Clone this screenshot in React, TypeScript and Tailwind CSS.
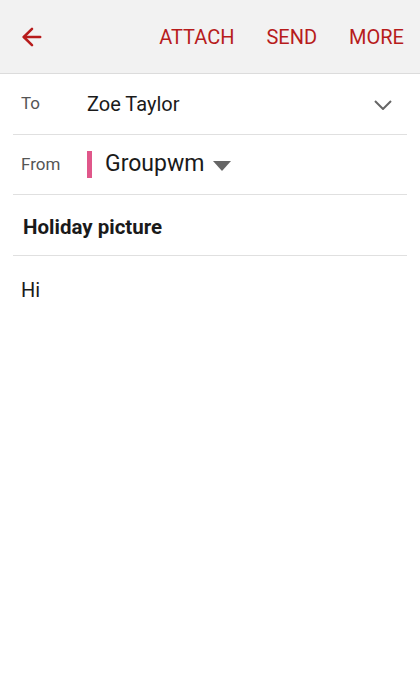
import { ArrowLeft } from 'lucide-react'

const RED = 'text-[#b71c1c]'

export default function App() {
  return (
    <div className="min-h-[700px] bg-white font-['Roboto',sans-serif]">
      {/* Top action bar */}
      <div className="flex h-[74px] items-center border-b border-[#dcdcdc] bg-[#f2f2f2] pl-[18px] pr-[16px]">
        <button type="button" aria-label="Back" className={`${RED} flex items-center`}>
          <ArrowLeft size={28} strokeWidth={2.2} />
        </button>
        <div className={`ml-auto flex items-center gap-[32px] text-[20px] ${RED}`}>
          <span>ATTACH</span>
          <span>SEND</span>
          <span>MORE</span>
        </div>
      </div>

      <div className="mx-[13px]">
        {/* To */}
        <div className="flex h-[61px] items-center border-b border-[#e0e0e0] pl-[8px] pr-[15px]">
          <span className="w-[66px] text-[17px] text-[#555]">To</span>
          <span className="text-[20px] text-[#1a1a1a]">Zoe Taylor</span>
          <svg width="18" height="10" viewBox="0 0 18 10" className="ml-auto mt-[2px]">
            <path d="M1 1 L9 9 L17 1" fill="none" stroke="#666" strokeWidth="2" />
          </svg>
        </div>

        {/* From */}
        <div className="flex h-[60px] items-center border-b border-[#e0e0e0] pl-[8px]">
          <span className="w-[66px] text-[17px] text-[#555]">From</span>
          <span className="h-[27px] w-[5px] bg-[#e0578a]" />
          <span className="ml-[13px] text-[23px] text-[#1a1a1a]">Groupwm</span>
          <svg width="18" height="10" viewBox="0 0 18 10" className="ml-[9px] mt-[2px]">
            <path d="M0 0 L18 0 L9 10 Z" fill="#666" />
          </svg>
        </div>

        {/* Subject */}
        <div className="flex h-[61px] items-center border-b border-[#e0e0e0] pl-[10px] pt-[4px]">
          <span className="text-[20.5px] font-bold text-[#1a1a1a]">Holiday picture</span>
        </div>

        {/* Body */}
        <div className="pl-[8px] pt-[19px] text-[20px] text-[#1a1a1a]">Hi</div>
      </div>
    </div>
  )
}
